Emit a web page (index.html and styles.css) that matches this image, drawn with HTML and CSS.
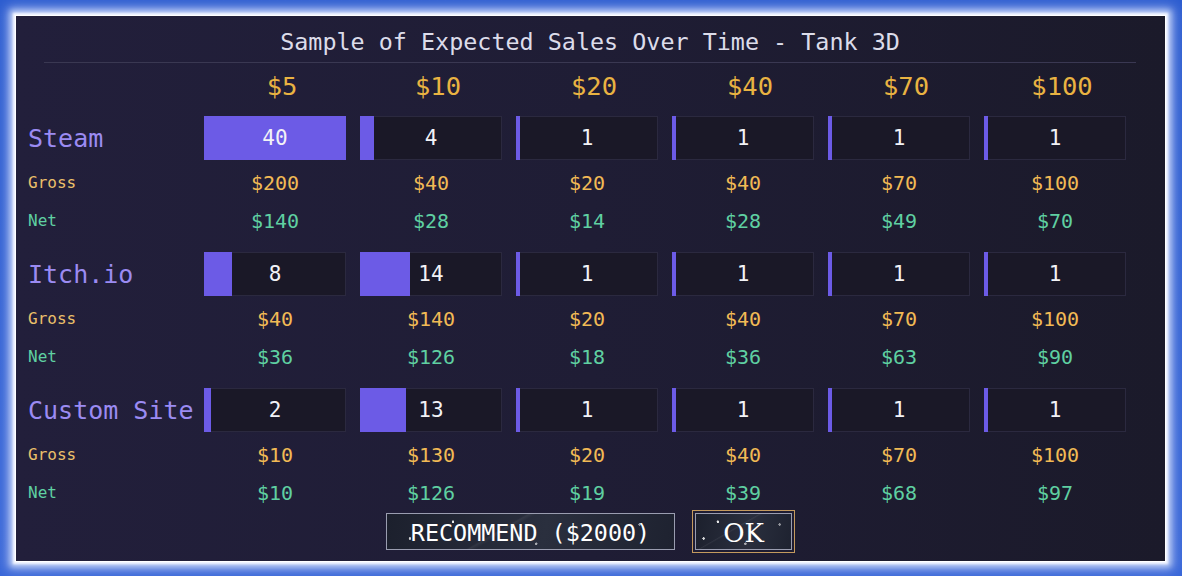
FILE: index.html
```html
<!DOCTYPE html>
<html>
<head>
<meta charset="utf-8">
<title>Sample of Expected Sales Over Time</title>
<link rel="stylesheet" href="styles.css">
</head>
<body>
<div class="screen">
  <div class="panel">
    <div class="title">Sample of Expected Sales Over Time - Tank 3D</div>
    <div class="table">
      <div class="row head">
        <div class="label"></div>
        <div class="price">$5</div>
        <div class="price">$10</div>
        <div class="price">$20</div>
        <div class="price">$40</div>
        <div class="price">$70</div>
        <div class="price">$100</div>
      </div>

      <div class="section">
        <div class="row cells">
          <div class="label platform">Steam</div>
          <div class="cell"><span class="fill" style="width:100%"></span><span class="num">40</span></div>
          <div class="cell"><span class="fill" style="width:10%"></span><span class="num">4</span></div>
          <div class="cell"><span class="fill" style="width:2.5%"></span><span class="num">1</span></div>
          <div class="cell"><span class="fill" style="width:2.5%"></span><span class="num">1</span></div>
          <div class="cell"><span class="fill" style="width:2.5%"></span><span class="num">1</span></div>
          <div class="cell"><span class="fill" style="width:2.5%"></span><span class="num">1</span></div>
        </div>
        <div class="row gross">
          <div class="label small">Gross</div>
          <div class="val">$200</div><div class="val">$40</div><div class="val">$20</div><div class="val">$40</div><div class="val">$70</div><div class="val">$100</div>
        </div>
        <div class="row net">
          <div class="label small">Net</div>
          <div class="val">$140</div><div class="val">$28</div><div class="val">$14</div><div class="val">$28</div><div class="val">$49</div><div class="val">$70</div>
        </div>
      </div>

      <div class="section">
        <div class="row cells">
          <div class="label platform">Itch.io</div>
          <div class="cell"><span class="fill" style="width:20%"></span><span class="num">8</span></div>
          <div class="cell"><span class="fill" style="width:35%"></span><span class="num">14</span></div>
          <div class="cell"><span class="fill" style="width:2.5%"></span><span class="num">1</span></div>
          <div class="cell"><span class="fill" style="width:2.5%"></span><span class="num">1</span></div>
          <div class="cell"><span class="fill" style="width:2.5%"></span><span class="num">1</span></div>
          <div class="cell"><span class="fill" style="width:2.5%"></span><span class="num">1</span></div>
        </div>
        <div class="row gross">
          <div class="label small">Gross</div>
          <div class="val">$40</div><div class="val">$140</div><div class="val">$20</div><div class="val">$40</div><div class="val">$70</div><div class="val">$100</div>
        </div>
        <div class="row net">
          <div class="label small">Net</div>
          <div class="val">$36</div><div class="val">$126</div><div class="val">$18</div><div class="val">$36</div><div class="val">$63</div><div class="val">$90</div>
        </div>
      </div>

      <div class="section last">
        <div class="row cells">
          <div class="label platform">Custom Site</div>
          <div class="cell"><span class="fill" style="width:5%"></span><span class="num">2</span></div>
          <div class="cell"><span class="fill" style="width:32.5%"></span><span class="num">13</span></div>
          <div class="cell"><span class="fill" style="width:2.5%"></span><span class="num">1</span></div>
          <div class="cell"><span class="fill" style="width:2.5%"></span><span class="num">1</span></div>
          <div class="cell"><span class="fill" style="width:2.5%"></span><span class="num">1</span></div>
          <div class="cell"><span class="fill" style="width:2.5%"></span><span class="num">1</span></div>
        </div>
        <div class="row gross">
          <div class="label small">Gross</div>
          <div class="val">$10</div><div class="val">$130</div><div class="val">$20</div><div class="val">$40</div><div class="val">$70</div><div class="val">$100</div>
        </div>
        <div class="row net">
          <div class="label small">Net</div>
          <div class="val">$10</div><div class="val">$126</div><div class="val">$19</div><div class="val">$39</div><div class="val">$68</div><div class="val">$97</div>
        </div>
      </div>
    </div>

    <div class="buttons">
      <div class="btn recommend">RECOMMEND ($2000)</div>
      <div class="ok"><div class="btn ok-inner">OK</div></div>
    </div>
  </div>
</div>
</body>
</html>
```
FILE: styles.css
```css
html, body {
  margin: 0;
  padding: 0;
}
body {
  width: 1182px;
  height: 576px;
  overflow: hidden;
  background: linear-gradient(180deg, #2c5ccf 0%, #3866d8 100%);
  font-family: "DejaVu Sans Mono", "Liberation Mono", monospace;
}
.screen {
  padding: 16px 17px 15px 16px;
}
.panel {
  height: 545px;
  box-sizing: border-box;
  background: linear-gradient(90deg, #221f3b 0%, #1f1d35 50%, #1b1a2a 100%);
  box-shadow:
    0 0 0 1px #ffffff,
    0 0 2px 3px #f2f5ff,
    0 0 6px 6px #c0d0f6,
    0 0 12px 9px #7f9be6;
}
.title {
  margin: 0 29px 0 28px;
  padding-top: 6px;
  line-height: 40px;
  font-size: 23.4px;
  color: #dcdcea;
  text-align: center;
  border-bottom: 1px solid #3a3852;
}
.table {
  margin-left: 12px;
}
.row {
  display: grid;
  grid-template-columns: 176px repeat(6, 156px);
}
.head {
  height: 47px;
  line-height: 47px;
  margin-bottom: 6px;
}
.price {
  text-align: center;
  font-size: 25.5px;
  color: #e9b342;
}
.section {
  margin-bottom: 12px;
}
.section.last {
  margin-bottom: 0;
}
.cells {
  height: 44px;
}
.platform {
  font-size: 25px;
  line-height: 42px;
  padding-top: 2px;
  color: #9b8bf2;
  white-space: nowrap;
}
.cell {
  width: 142px;
  height: 44px;
  display: grid;
  background: #1a1827;
  box-shadow: inset 0 0 0 1px #2b293f;
}
.fill {
  grid-area: 1 / 1;
  justify-self: start;
  background: #6c5be6;
}
.num {
  grid-area: 1 / 1;
  justify-self: center;
  align-self: center;
  font-size: 21px;
  line-height: 44px;
  color: #f2f2f6;
}
.gross {
  margin-top: 4px;
}
.gross, .net {
  height: 38px;
  line-height: 38px;
  overflow: hidden;
}
.small {
  font-size: 16px;
}
.val {
  width: 142px;
  text-align: center;
  font-size: 20px;
}
.gross .small {
  color: #ecc06a;
}
.gross .val {
  color: #f1ba55;
}
.net .small, .net .val {
  color: #5fd0a2;
}
.buttons {
  margin-top: -2px;
  display: flex;
  justify-content: center;
  align-items: center;
  gap: 17px;
}
.btn {
  box-sizing: border-box;
  height: 37px;
  display: flex;
  align-items: center;
  justify-content: center;
  color: #ffffff;
  border: 1px solid #9a9db0;
  background:
    radial-gradient(circle at 8% 70%, rgba(255,255,255,0.8) 0 1px, transparent 1.5px),
    radial-gradient(circle at 23% 22%, rgba(255,255,255,0.9) 0 1px, transparent 1.5px),
    radial-gradient(circle at 52% 85%, rgba(255,255,255,0.6) 0 1px, transparent 1.5px),
    radial-gradient(circle at 88% 30%, rgba(255,255,255,0.5) 0 1px, transparent 1.5px),
    linear-gradient(150deg, transparent 40%, rgba(255,255,255,0.06) 41%, transparent 43%),
    linear-gradient(100deg, #1c202d 0%, #2a2f3e 55%, #1e2230 100%);
}
.recommend {
  width: 289px;
  font-size: 23.4px;
  padding-top: 2px;
}
.ok {
  border: 1px solid #c49a5e;
  padding: 2px;
}
.ok-inner {
  width: 97px;
  font-family: "DejaVu Serif", "Liberation Serif", serif;
  font-size: 26px;
  padding-top: 2px;
}
```
